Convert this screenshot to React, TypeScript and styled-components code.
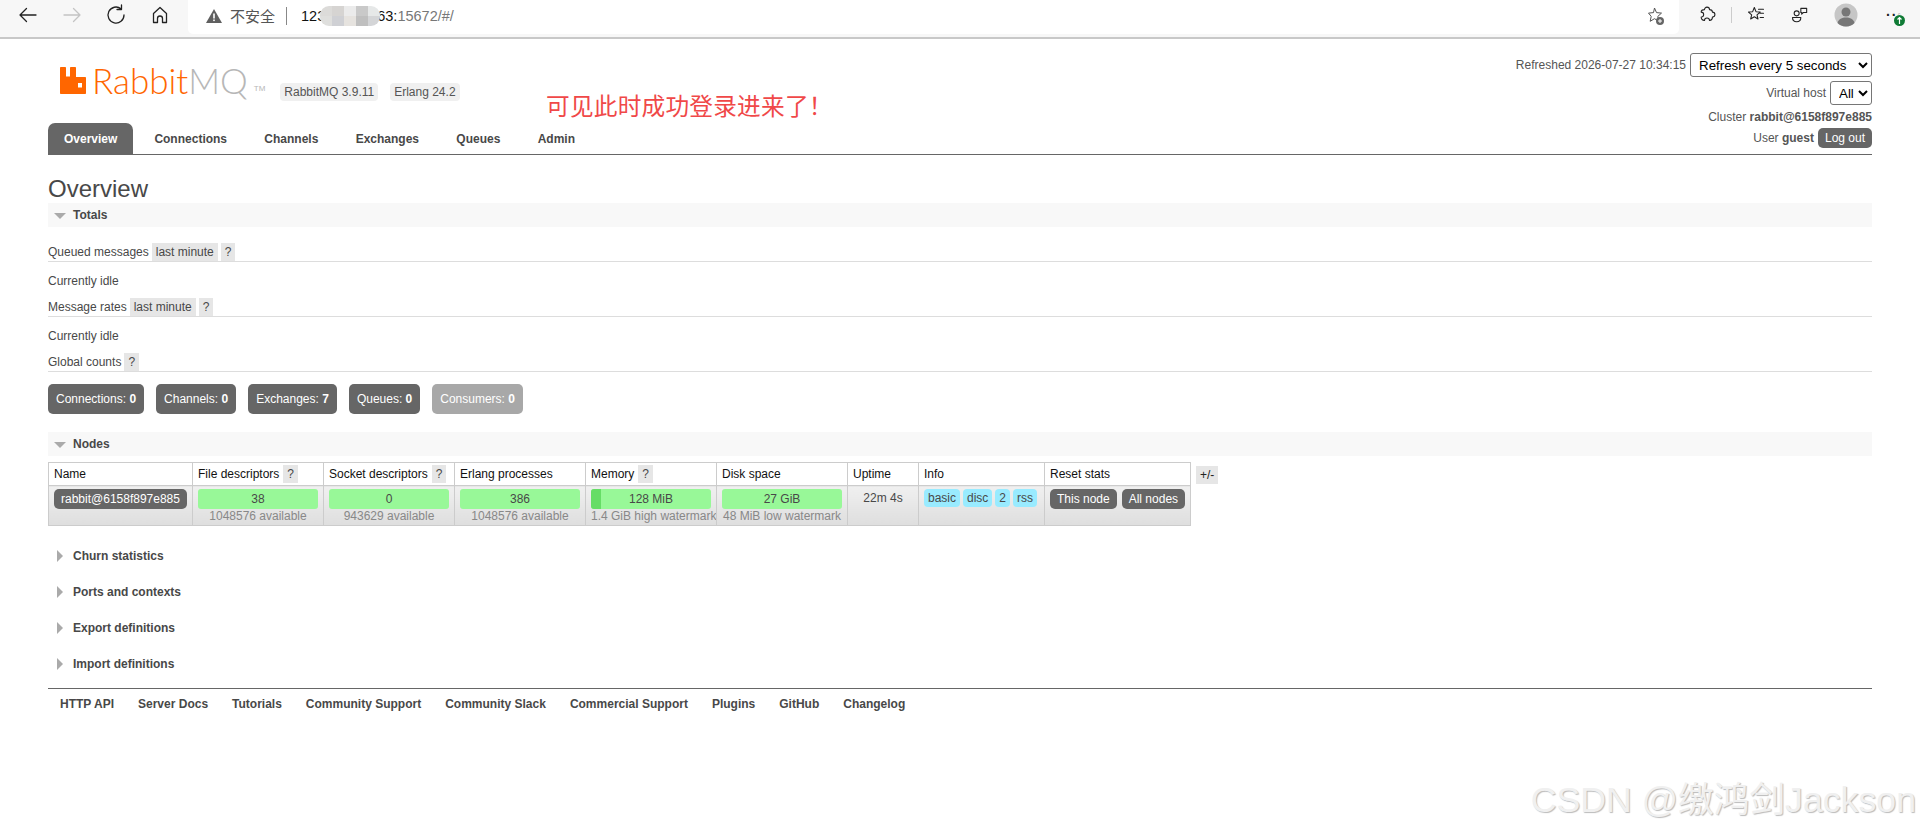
import React from "react";
import styled, { createGlobalStyle } from "styled-components";

const GlobalStyles = createGlobalStyle`
  * {
    box-sizing: border-box;
  }
  html, body {
    margin: 0;
    padding: 0;
    background: #fff;
  }
  body {
    font-family: "Liberation Sans", Arial, sans-serif;
    font-size: 12px;
    color: #484848;
  }
`;

const Page = styled.div`
  position: relative;
  width: 1920px;
  height: 832px;
  overflow: hidden;
`;

/* browser chrome */
const BrowserBar = styled.div`
  height: 39px;
  background: #f7f7f7;
  border-bottom: 2px solid #c8c8c8;
  display: flex;
  align-items: flex-start;
`;

const NavButtons = styled.div`
  width: 188px;
  height: 30px;
  padding-left: 16px;
  display: flex;
  align-items: center;
  gap: 20px;
  color: #222;
`;

const ForwardSlot = styled.span`
  display: flex;
  color: #c4c4c4;
`;

const AddressBar = styled.div`
  width: 1491px;
  height: 34px;
  background: #fff;
  border-radius: 0 0 5px 5px;
  display: flex;
  align-items: center;
  padding: 0 14px 3px 18px;
  font-size: 14.5px;
`;

const SecurityText = styled.span`
  margin-left: 8px;
  color: #555;
  font-family: "Noto Sans CJK SC", sans-serif;
  font-size: 15px;
`;

const AddressDivider = styled.span`
  width: 1px;
  height: 18px;
  background: #888;
  margin: 0 14px 0 11px;
`;

const UrlHost = styled.span`
  color: #111;
`;

const UrlBlur = styled.span`
  position: relative;
  display: grid;
  grid-template-columns: repeat(5, 1fr);
  grid-template-rows: repeat(2, 1fr);
  width: 60px;
  height: 20px;
  margin: 0 -3px 0 -5px;
  border-radius: 9px;
  overflow: hidden;
`;

const BlurCell = styled.span<{ $c: string }>`
  background: ${(p) => p.$c};
`;

const UrlRest = styled.span`
  color: #777;
`;

const StarSlot = styled.span`
  margin-left: auto;
  display: flex;
`;

const ToolIcons = styled.div`
  flex: 1;
  height: 30px;
  display: flex;
  align-items: center;
  padding-left: 18px;
  color: #222;
`;

const ToolDivider = styled.span`
  width: 1px;
  height: 16px;
  background: #ccc;
  margin: 0 14px 0 14px;
`;

const ToolSlot = styled.span<{ $left: number }>`
  display: flex;
  margin-left: ${(p) => p.$left}px;
`;

const MoreSlot = styled.span`
  position: relative;
  margin-left: 28px;
  font-size: 14px;
  font-weight: 700;
  letter-spacing: 1px;
  line-height: 14px;
`;

const UpdateBadge = styled.svg`
  position: absolute;
  left: 7px;
  top: 6px;
  width: 13px;
  height: 13px;
`;

/* rabbit header */
const Outer = styled.div`
  padding: 0 48px;
`;

const Header = styled.header`
  position: relative;
  height: 116px;
  border-bottom: 1px solid #666;
`;

const LogoRow = styled.div`
  display: flex;
  align-items: flex-end;
  height: 62px;
  padding: 0 0 0 12px;
`;

const LogoMark = styled.svg`
  width: 26px;
  height: 27px;
  margin-bottom: 7px;
  flex: none;
`;

const LogoWord = styled.span`
  font-family: Lato, "Open Sans", sans-serif;
  font-weight: 300;
  font-size: 35px;
  line-height: 40px;
  color: #f60;
  margin: 0 0 1px 6px;
`;

const LogoGrey = styled.span`
  color: #b7b7b7;
`;

const LogoTm = styled.span`
  font-size: 8px;
  line-height: 10px;
  color: #b7b7b7;
  margin: 0 0 7px 6px;
`;

const VersionTags = styled.div`
  display: flex;
  gap: 12px;
  margin: 0 0 0 15px;
`;

const VersionTag = styled.span`
  background: #f0f0f0;
  border-radius: 4px;
  padding: 0 4px;
  line-height: 18px;
  height: 18px;
  font-size: 12px;
  color: #555;
`;

const Tabs = styled.nav`
  display: flex;
  height: 31px;
  margin-top: 22px;
`;

const Tab = styled.a<{ $active?: boolean }>`
  display: block;
  padding: 0 ${(p) => (p.$active ? "16px" : "15px")};
  margin-right: ${(p) => (p.$active ? "6px" : "7.3px")};
  line-height: 32px;
  font-weight: 700;
  color: ${(p) => (p.$active ? "#fff" : "#484848")};
  background: ${(p) => (p.$active ? "#666" : "transparent")};
  border-radius: 7px 7px 0 0;
`;

const StatusBox = styled.div`
  position: absolute;
  right: 0;
  top: 14px;
  display: flex;
  flex-direction: column;
  align-items: flex-end;
  color: #555;
`;

const StatusRow = styled.div<{ $after: number }>`
  display: flex;
  align-items: center;
  height: 24px;
  gap: 4px;
  margin-bottom: ${(p) => p.$after}px;
`;

const StatusLine = styled.div<{ $h: number }>`
  height: ${(p) => p.$h}px;
  display: flex;
  align-items: center;
  gap: 4px;
`;

const NativeSelect = styled.select<{ $w: number }>`
  font-family: "Liberation Sans", Arial, sans-serif;
  font-size: 13.33px;
  width: ${(p) => p.$w}px;
  height: 24px;
  padding: 0 0 0 4px;
  color: #000;
  background: #fff;
  border: 1px solid #767676;
  border-radius: 3px;
`;

const DarkButton = styled.span`
  display: inline-block;
  background: #666;
  color: #fff;
  border-radius: 5px;
  padding: 0 7px;
  line-height: 20px;
  height: 20px;
`;

/* main */
const Title = styled.h1`
  margin: 20px 0 0;
  font-size: 24px;
  font-weight: 400;
  line-height: 28px;
  color: #484848;
`;

const SectionBar = styled.div<{ $open?: boolean }>`
  display: flex;
  align-items: center;
  height: ${(p) => (p.$open ? "24px" : "25px")};
  background: ${(p) => (p.$open ? "#f8f8f8" : "transparent")};
  font-weight: 700;
  padding-left: ${(p) => (p.$open ? "6px" : "9px")};
`;

const ArrowDown = styled.span`
  width: 0;
  height: 0;
  border-left: 6px solid transparent;
  border-right: 6px solid transparent;
  border-top: 6px solid #aaa;
  margin-right: 7px;
  margin-top: 2px;
`;

const ArrowRight = styled.span`
  width: 0;
  height: 0;
  border-top: 6px solid transparent;
  border-bottom: 6px solid transparent;
  border-left: 6px solid #aaa;
  margin-right: 10px;
`;

const Totals = styled.section`
  padding-top: 16px;
`;

const SubHead = styled.div`
  display: flex;
  align-items: stretch;
  height: 19px;
  border-bottom: 1px solid #ddd;
  line-height: 18px;
`;

const SubLabel = styled.span`
  margin-right: 3px;
`;

const GreyChip = styled.span`
  background: #e6e6e6;
  padding: 0 4px;
  margin-right: 3px;
  line-height: 18px;
`;

const IdleText = styled.p`
  margin: 0;
  height: 36px;
  line-height: 39px;
`;

const CountRow = styled.div`
  display: flex;
  gap: 12px;
  margin-top: 12px;
`;

const CountBox = styled.span<{ $off?: boolean }>`
  background: ${(p) => (p.$off ? "#a8a8a8" : "#666")};
  color: #fff;
  border-radius: 5px;
  height: 30px;
  line-height: 30px;
  padding: 0 8px;
`;

const NodesBar = styled(SectionBar)`
  margin-top: 18px;
`;

const TableRow = styled.div`
  display: flex;
  align-items: flex-start;
  margin: 6px 0 0;
`;

const NodesTable = styled.table`
  border-collapse: collapse;
  table-layout: fixed;
  width: 1142px;
  border: 1px solid #ccc;
  color: #484848;
`;

const HeadCell = styled.th`
  border: 1px solid #ccc;
  height: 23px;
  padding: 0 5px;
  text-align: left;
  font-weight: 400;
  color: #111;
  white-space: nowrap;
  overflow: hidden;
`;

const BodyCell = styled.td`
  border: 1px solid #ccc;
  height: 40px;
  padding: 3px 5px 0;
  vertical-align: top;
  background: linear-gradient(#f0f0f0, #dedede);
  white-space: nowrap;
  overflow: hidden;
`;

const HeadChip = styled.span`
  display: inline-block;
  background: #e6e6e6;
  color: #484848;
  padding: 0 4px;
  margin-left: 4px;
  line-height: 18px;
`;

const NamePill = styled.span`
  display: block;
  background: #666;
  color: #fff;
  border-radius: 5px;
  text-align: center;
  line-height: 20px;
  height: 20px;
`;

const Bar = styled.div`
  position: relative;
  height: 20px;
  line-height: 20px;
  background: #98f898;
  border-radius: 3px;
  text-align: center;
  overflow: hidden;
`;

const BarFill = styled.span`
  position: absolute;
  left: 0;
  top: 0;
  bottom: 0;
  background: #66dd66;
`;

const BarText = styled.span`
  position: relative;
`;

const SubNote = styled.div`
  color: #888;
  text-align: center;
  line-height: 15px;
`;

const UptimeText = styled.div`
  text-align: center;
  line-height: 18px;
`;

const TagList = styled.div`
  display: flex;
  gap: 3px;
`;

const InfoTag = styled.span`
  background: #99ebff;
  border-radius: 4px;
  padding: 0 4px;
  line-height: 18px;
`;

const ResetCell = styled.div`
  display: flex;
  gap: 5px;
`;

const PlusMinus = styled.span`
  background: #e6e6e6;
  color: #222;
  margin: 4px 0 0 5px;
  padding: 0 4px;
  line-height: 18px;
`;

const Closed = styled.div`
  display: flex;
  flex-direction: column;
  margin-top: 17px;
  gap: 11px;
`;

const Footer = styled.footer`
  margin-top: 12px;
  border-top: 1px solid #666;
  display: flex;
  gap: 24px;
  padding: 7px 12px;
  font-weight: 700;
  line-height: 16px;
`;

/* overlays */
const Annotation = styled.div`
  position: absolute;
  left: 546px;
  top: 90px;
  color: #f04848;
  font-family: "Noto Sans CJK SC", sans-serif;
  font-size: 23.7px;
  line-height: 30px;
  letter-spacing: 0.2px;
`;

const Watermark = styled.div`
  position: absolute;
  right: 4px;
  top: 777px;
  font-family: "Liberation Sans", "Noto Sans CJK SC", sans-serif;
  font-size: 35.7px;
  line-height: 46px;
  font-weight: 400;
  color: #f0f0f0;
  text-shadow: 1px 1px 1px #bbb;
  white-space: nowrap;
`;

const colWidths = [144, 131, 131, 131, 131, 131, 71, 126, 146];

const Cols = () => (
  <colgroup>
    {colWidths.map((w, i) => (
      <col key={i} width={w} />
    ))}
  </colgroup>
);

const Stroke = ({ children, size = 24 }: { children: React.ReactNode; size?: number }) => (
  <svg
    width={size}
    height={size}
    viewBox="0 0 24 24"
    fill="none"
    stroke="currentColor"
    strokeWidth={1.3}
    strokeLinecap="round"
    strokeLinejoin="round"
  >
    {children}
  </svg>
);

const counts = [
  ["Connections", "0"],
  ["Channels", "0"],
  ["Exchanges", "7"],
  ["Queues", "0"],
];

const blurColors = [
  "#dcdbd9", "#d6d4d2", "#ebebeb", "#c9c9c9", "#e6e8e8",
  "#dfdfdd", "#cfd0d4", "#e6e3df", "#bfbfbf", "#d4d5d7",
];

const App = () => {
  return (
    <>
      <GlobalStyles />
      <Page>
        <BrowserBar>
          <NavButtons>
            <Stroke>
              <path d="M20 12H4M10.500 5.500L4 12l6.500 6.500" />
            </Stroke>
            <ForwardSlot>
              <Stroke>
                <path d="M4 12h16M13.500 5.500L20 12l-6.500 6.500" />
              </Stroke>
            </ForwardSlot>
            <Stroke>
              <path d="M20 12a8 8 0 1 1-3-6.200M17.500 2v4.500H13" />
            </Stroke>
            <Stroke>
              <path d="M5.500 19.500v-9L12 4.500l6.500 6v9h-4v-4a2.500 2.500 0 0 0-5 0v4z" />
            </Stroke>
          </NavButtons>
          <AddressBar>
            <svg width="16" height="14" viewBox="0 0 16 14">
              <path d="M8 0L16 14H0z" fill="#5f5f5f" />
              <rect x="7.200" y="4.500" width="1.600" height="5" fill="#fff" />
              <rect x="7.200" y="10.500" width="1.600" height="1.600" fill="#fff" />
            </svg>
            <SecurityText>不安全</SecurityText>
            <AddressDivider />
            <UrlHost>123</UrlHost>
            <UrlBlur>
              {blurColors.map((c, i) => (
                <BlurCell key={i} $c={c} />
              ))}
            </UrlBlur>
            <UrlHost>63:</UrlHost>
            <UrlRest>15672/#/</UrlRest>
            <StarSlot>
              <svg width="20" height="20" viewBox="0 0 20 20" fill="none" stroke="#555" strokeWidth="1">
                <path d="M9.500 2l2 4.600 5 .5-3.700 3.300 1 4.900-4.300-2.600-4.300 2.600 1-4.900L3.500 7.100l5-.5z" />
                <circle cx="15" cy="15" r="4" fill="#666" stroke="none" />
                <path d="M13 15h4M15 13v4" stroke="#fff" />
              </svg>
            </StarSlot>
          </AddressBar>
          <ToolIcons>
            <Stroke size={20}>
              <path d="M9 5.500a3 3 0 0 1 6 0c2 0 3.500 1 3.500 3a3 3 0 0 1 0 6c0 2.500-1.500 4-3.500 4a3 3 0 0 0-6 0c-2.500 0-4-1.500-4-4a3 3 0 0 0 0-6c0-2 1.500-3 4-3z" />
            </Stroke>
            <ToolDivider />
            <Stroke size={20}>
              <path d="M10 3l2 5 5 .5-3.800 3.300 1.200 5-4.400-2.700-4.400 2.700 1.200-5L3 8.500 8 8zM15 5h6M17 10h4M17 15h4" />
            </Stroke>
            <ToolSlot $left={24}>
              <Stroke size={20}>
                <path d="M13 4h7v5h-4l-2 2v-2h-1zM5 10a3 3 0 1 0 6 0a3 3 0 1 0-6 0M3 15h10c0 3-2 5-5 5s-5-2-5-5z" />
              </Stroke>
            </ToolSlot>
            <ToolSlot $left={24}>
              <svg width="24" height="24" viewBox="0 0 24 24">
                <circle cx="12" cy="12" r="11.500" fill="#c6c6c6" />
                <circle cx="12" cy="9" r="4.500" fill="#777" />
                <path d="M3.500 20c1-4 4.500-5.500 8.500-5.500s7.500 1.500 8.500 5.500c-2 2.300-5 3.500-8.500 3.500s-6.500-1.200-8.500-3.500z" fill="#777" />
              </svg>
            </ToolSlot>
            <MoreSlot>
              ···
              <UpdateBadge viewBox="0 0 13 13">
                <circle cx="6.500" cy="6.500" r="6.500" fill="#f7f7f7" />
                <circle cx="6.500" cy="6.500" r="5.500" fill="#0f7b35" />
                <path d="M6.500 10V3.500M4.500 5.500l2-2 2 2" stroke="#fff" strokeWidth="1.200" fill="none" />
              </UpdateBadge>
            </MoreSlot>
          </ToolIcons>
        </BrowserBar>

        <Outer>
          <Header>
            <LogoRow>
              <LogoMark viewBox="0 0 26 27">
                <path
                  fill="#f60"
                  d="M0 .8a.8.8 0 0 1 .8-.8h4.400a.8.8 0 0 1 .8.800V9.500h4V.8a.8.8 0 0 1 .8-.8h4.400a.8.8 0 0 1 .8.800V10h9.200a.8.8 0 0 1 .8.800v15.400a.8.8 0 0 1-.8.800H.8a.8.8 0 0 1-.8-.8zM18 16v4.500h4V16z"
                  fillRule="evenodd"
                />
              </LogoMark>
              <LogoWord>
                Rabbit<LogoGrey>MQ</LogoGrey>
              </LogoWord>
              <LogoTm>TM</LogoTm>
              <VersionTags>
                <VersionTag>RabbitMQ 3.9.11</VersionTag>
                <VersionTag>Erlang 24.2</VersionTag>
              </VersionTags>
            </LogoRow>
            <Tabs>
              <Tab $active>Overview</Tab>
              <Tab>Connections</Tab>
              <Tab>Channels</Tab>
              <Tab>Exchanges</Tab>
              <Tab>Queues</Tab>
              <Tab>Admin</Tab>
            </Tabs>
            <StatusBox>
              <StatusRow $after={4}>
                <span>Refreshed 2026-07-27 10:34:15</span>
                <NativeSelect $w={182} defaultValue="5">
                  <option value="5">Refresh every 5 seconds</option>
                </NativeSelect>
              </StatusRow>
              <StatusRow $after={1}>
                <span>Virtual host</span>
                <NativeSelect $w={42} defaultValue="all">
                  <option value="all">All</option>
                </NativeSelect>
              </StatusRow>
              <StatusLine $h={22}>
                <span>
                  Cluster <b>rabbit@6158f897e885</b>
                </span>
              </StatusLine>
              <StatusLine $h={20}>
                <span>
                  User <b>guest</b>
                </span>
                <DarkButton>Log out</DarkButton>
              </StatusLine>
            </StatusBox>
          </Header>

          <Title>Overview</Title>
          <SectionBar $open>
            <ArrowDown />
            Totals
          </SectionBar>
          <Totals>
            <SubHead>
              <SubLabel>Queued messages</SubLabel>
              <GreyChip>last minute</GreyChip>
              <GreyChip>?</GreyChip>
            </SubHead>
            <IdleText>Currently idle</IdleText>
            <SubHead>
              <SubLabel>Message rates</SubLabel>
              <GreyChip>last minute</GreyChip>
              <GreyChip>?</GreyChip>
            </SubHead>
            <IdleText>Currently idle</IdleText>
            <SubHead>
              <SubLabel>Global counts</SubLabel>
              <GreyChip>?</GreyChip>
            </SubHead>
            <CountRow>
              {counts.map(([label, n]) => (
                <CountBox key={label}>
                  {label}: <b>{n}</b>
                </CountBox>
              ))}
              <CountBox $off>
                Consumers: <b>0</b>
              </CountBox>
            </CountRow>
          </Totals>

          <NodesBar $open>
            <ArrowDown />
            Nodes
          </NodesBar>
          <TableRow>
            <NodesTable>
              <Cols />
              <thead>
                <tr>
                  <HeadCell>Name</HeadCell>
                  <HeadCell>
                    File descriptors<HeadChip>?</HeadChip>
                  </HeadCell>
                  <HeadCell>
                    Socket descriptors<HeadChip>?</HeadChip>
                  </HeadCell>
                  <HeadCell>Erlang processes</HeadCell>
                  <HeadCell>
                    Memory<HeadChip>?</HeadChip>
                  </HeadCell>
                  <HeadCell>Disk space</HeadCell>
                  <HeadCell>Uptime</HeadCell>
                  <HeadCell>Info</HeadCell>
                  <HeadCell>Reset stats</HeadCell>
                </tr>
              </thead>
              <tbody>
                <tr>
                  <BodyCell>
                    <NamePill>rabbit@6158f897e885</NamePill>
                  </BodyCell>
                  <BodyCell>
                    <Bar>38</Bar>
                    <SubNote>1048576 available</SubNote>
                  </BodyCell>
                  <BodyCell>
                    <Bar>0</Bar>
                    <SubNote>943629 available</SubNote>
                  </BodyCell>
                  <BodyCell>
                    <Bar>386</Bar>
                    <SubNote>1048576 available</SubNote>
                  </BodyCell>
                  <BodyCell>
                    <Bar>
                      <BarFill style={{ width: "8%" }} />
                      <BarText>128 MiB</BarText>
                    </Bar>
                    <SubNote>1.4 GiB high watermark</SubNote>
                  </BodyCell>
                  <BodyCell>
                    <Bar>27 GiB</Bar>
                    <SubNote>48 MiB low watermark</SubNote>
                  </BodyCell>
                  <BodyCell>
                    <UptimeText>22m 4s</UptimeText>
                  </BodyCell>
                  <BodyCell>
                    <TagList>
                      <InfoTag>basic</InfoTag>
                      <InfoTag>disc</InfoTag>
                      <InfoTag>2</InfoTag>
                      <InfoTag>rss</InfoTag>
                    </TagList>
                  </BodyCell>
                  <BodyCell>
                    <ResetCell>
                      <DarkButton>This node</DarkButton>
                      <DarkButton>All nodes</DarkButton>
                    </ResetCell>
                  </BodyCell>
                </tr>
              </tbody>
            </NodesTable>
            <PlusMinus>+/-</PlusMinus>
          </TableRow>

          <Closed>
            {["Churn statistics", "Ports and contexts", "Export definitions", "Import definitions"].map((s) => (
              <SectionBar key={s}>
                <ArrowRight />
                {s}
              </SectionBar>
            ))}
          </Closed>

          <Footer>
            <span>HTTP API</span>
            <span>Server Docs</span>
            <span>Tutorials</span>
            <span>Community Support</span>
            <span>Community Slack</span>
            <span>Commercial Support</span>
            <span>Plugins</span>
            <span>GitHub</span>
            <span>Changelog</span>
          </Footer>
        </Outer>

        <Annotation>可见此时成功登录进来了！</Annotation>
        <Watermark>CSDN @缴鸿剑Jackson</Watermark>
      </Page>
    </>
  );
};

export default App;
